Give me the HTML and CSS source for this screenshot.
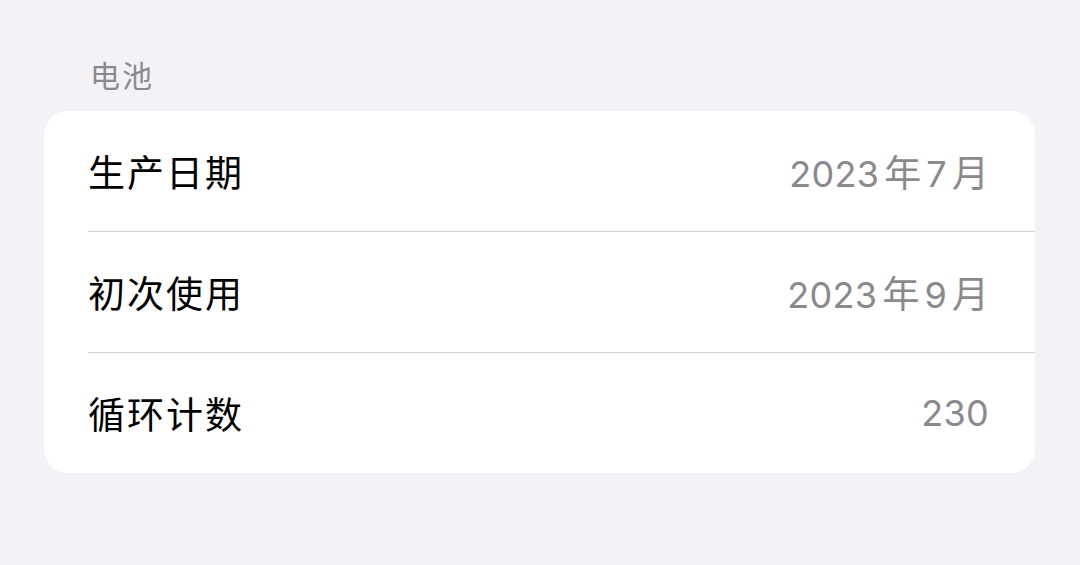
FILE: index.html
```html
<!DOCTYPE html>
<html lang="zh-CN">
<head>
<meta charset="utf-8">
<link rel="stylesheet" href="styles.css">
</head>
<body>
<div class="page">
  <div class="section-title">电池</div>
  <div class="card">
    <div class="row">
      <span class="label">生产日期</span>
      <span class="value"><span class="num">2023</span><span class="cjk">年</span><span class="num">7</span><span class="cjk">月</span></span>
    </div>
    <div class="row">
      <span class="label">初次使用</span>
      <span class="value"><span class="num">2023</span><span class="cjk">年</span><span class="num">9</span><span class="cjk">月</span></span>
    </div>
    <div class="row">
      <span class="label">循环计数</span>
      <span class="value"><span class="num">230</span></span>
    </div>
  </div>
</div>
</body>
</html>
```

FILE: styles.css
```css
html, body {
  margin: 0;
  padding: 0;
  background: #f2f2f7;
}
body {
  width: 1080px;
  height: 565px;
  overflow: hidden;
  font-family: "Noto Sans CJK SC", "Noto Sans", sans-serif;
}
.page {
  padding: 56px 45px 0 44px;
  display: flex;
  flex-direction: column;
}
.section-title {
  padding-left: 46px;
  font-size: 30px;
  line-height: 36px;
  letter-spacing: 2px;
  color: #8a8a8e;
  margin-bottom: 19px;
}
.card {
  background: #ffffff;
  border-radius: 24px;
  padding-left: 44px;
  display: flex;
  flex-direction: column;
}
.row {
  height: 120px;
  display: flex;
  align-items: center;
  justify-content: space-between;
  padding-right: 46px;
  border-bottom: 1px solid #d4d4d8;
}
.row:last-child {
  border-bottom: none;
}
.label {
  font-size: 37px;
  letter-spacing: 2px;
  color: #000000;
}
.value {
  display: flex;
  align-items: baseline;
  color: #8a8a8e;
}
.num {
  font-family: "Inter", "Noto Sans", sans-serif;
  font-size: 36px;
  letter-spacing: 0.3px;
}
.cjk {
  font-size: 37px;
  margin-left: 5px;
  margin-right: 5px;
}
.cjk:last-child {
  margin-right: 0;
}
```
